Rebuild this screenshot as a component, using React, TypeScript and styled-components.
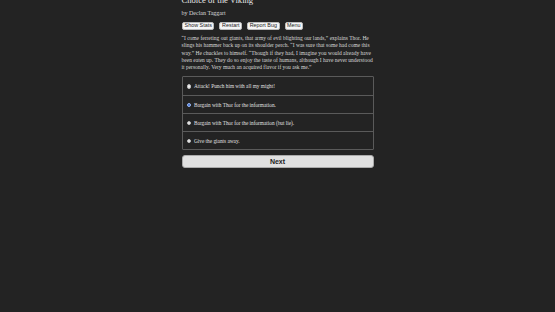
import React, { useState } from "react";
import styled, { createGlobalStyle } from "styled-components";

const Global = createGlobalStyle`
  html, body { margin: 0; padding: 0; background: #232323; }
  body { font-family: "Liberation Serif", "Times New Roman", serif; color: #dcdcdc; }
  * { box-sizing: border-box; }
`;

const Page = styled.div`
  width: 192px;
  margin: 0 auto;
  display: flex;
  flex-direction: column;
`;

const Title = styled.h1`
  margin: -5px 0 0;
  font-size: 8.6px;
  line-height: 11px;
  font-weight: normal;
  color: #e6e6e6;
`;

const Author = styled.div`
  margin-top: 4px;
  font-size: 6px;
  line-height: 7px;
  color: #dcdcdc;
`;

const ButtonRow = styled.div`
  display: flex;
  gap: 5px;
  margin-top: 5px;
  padding-left: 0.5px;
`;

const SmallButton = styled.button`
  font-family: "Liberation Sans", Arial, sans-serif;
  font-size: 5.4px;
  line-height: 5.5px;
  height: 7.5px;
  padding: 0 1.6px;
  border: 0.5px solid #bbb;
  border-radius: 2px;
  background: #f6f6f6;
  color: #222;
`;

const Paragraph = styled.p`
  margin: 5.5px 0 0;
  font-size: 5.5px;
  line-height: 7.3px;
  color: #d8d8d8;
`;

const Options = styled.div`
  margin-top: 5px;
  border: 1px solid #5a5a5a;
  border-radius: 1px;
  display: flex;
  flex-direction: column;
`;

const Option = styled.label`
  display: flex;
  align-items: center;
  gap: 3px;
  height: 18px;
  padding-left: 4px;
  font-size: 5.3px;
  color: #e0e0e0;
  & + & { border-top: 1px solid #5a5a5a; }
`;

const Radio = styled.span<{ $on: boolean }>`
  width: 4.5px;
  height: 4.5px;
  border-radius: 50%;
  flex: none;
  background: ${(p) => (p.$on ? "#3b6fd6" : "#f2f2f2")};
  border: ${(p) => (p.$on ? "1px solid #9db8ee" : "0.5px solid #bbb")};
`;

const NextButton = styled.button`
  margin-top: 4.5px;
  height: 13px;
  width: 100%;
  border: 1px solid #aaa;
  border-radius: 3px;
  background: #e0e0e0;
  color: #1c1c1c;
  font-family: "Liberation Sans", Arial, sans-serif;
  font-weight: bold;
  font-size: 7px;
  line-height: 11px;
  padding: 0;
`;

const choices = [
  "Attack! Punch him with all my might!",
  "Bargain with Thor for the information.",
  "Bargain with Thor for the information (but lie).",
  "Give the giants away.",
];

export default function App() {
  const [sel, setSel] = useState(1);
  return (
    <>
      <Global />
      <Page>
        <Title>Choice of the Viking</Title>
        <Author>by Declan Taggart</Author>
        <ButtonRow>
          <SmallButton>Show Stats</SmallButton>
          <SmallButton>Restart</SmallButton>
          <SmallButton>Report Bug</SmallButton>
          <SmallButton>Menu</SmallButton>
        </ButtonRow>
        <Paragraph>
          “I come ferreting out giants, that army of evil blighting our lands,” explains Thor. He
          slings his hammer back up on its shoulder perch. “I was sure that some had come this
          way.” He chuckles to himself. “Though if they had, I imagine you would already have
          been eaten up. They do so enjoy the taste of humans, although I have never understood
          it personally. Very much an acquired flavor if you ask me.”
        </Paragraph>
        <Options>
          {choices.map((c, i) => (
            <Option key={i} onClick={() => setSel(i)}>
              <Radio $on={sel === i} />
              {c}
            </Option>
          ))}
        </Options>
        <NextButton>Next</NextButton>
      </Page>
    </>
  );
}
